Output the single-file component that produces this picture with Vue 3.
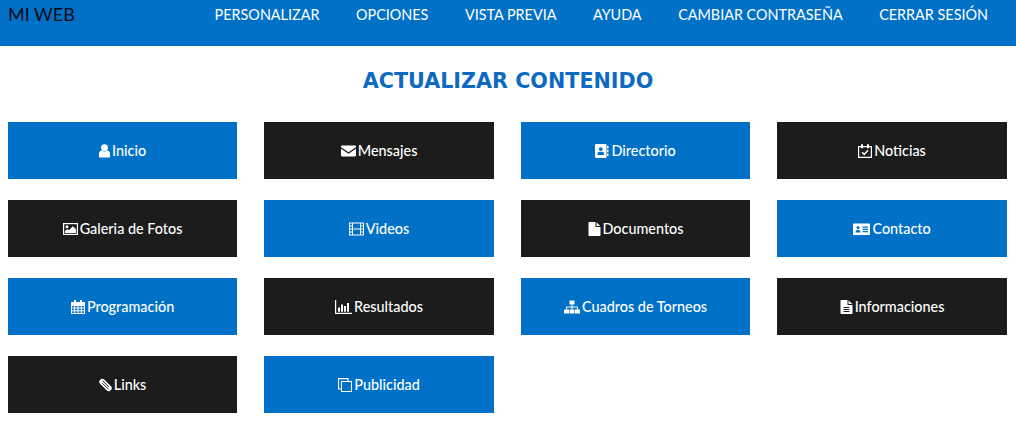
<template>
  <div class="page">
    <header class="topbar">
      <span class="brand">MI WEB</span>
      <nav class="menu">
        <a v-for="item in menu" :key="item" class="menu-link">{{ item }}</a>
      </nav>
    </header>

    <h1 class="title">ACTUALIZAR CONTENIDO</h1>

    <div class="tiles">
      <a v-for="tile in tiles" :key="tile.label" :class="['tile', tile.dark ? 'tile-dark' : 'tile-blue']">
        <svg class="icon" :width="tile.w || 14" height="14" :viewBox="`0 0 ${tile.w || 14} 14`" v-html="tile.icon"></svg>
        <span class="tile-label">{{ tile.label }}</span>
      </a>
    </div>
  </div>
</template>

<script setup>
const menu = ['PERSONALIZAR', 'OPCIONES', 'VISTA PREVIA', 'AYUDA', 'CAMBIAR CONTRASEÑA', 'CERRAR SESIÓN']

const tiles = [
  { label: 'Inicio', dark: false, w: 11, icon: '<circle cx="5.5" cy="3.7" r="3.4" fill="#fff"/><path d="M0 12.500V9.700C0 7.900 1.200 6.500 2.800 6.400 3.500 7 4.400 7.400 5.500 7.400S7.500 7 8.200 6.400C9.800 6.500 11 7.900 11 9.700V12.500C11 13.200 10.600 13.600 10 13.600H1C.4 13.600 0 13.200 0 12.500Z" fill="#fff"/>' },
  { label: 'Mensajes', dark: true, w: 15, icon: '<path d="M0 2.700C0 2 .5 1.500 1.200 1.500H13.800C14.500 1.500 15 2 15 2.700V3.200L7.500 8.200 0 3.200ZM0 4.800 7.500 9.800 15 4.800V11.300C15 12 14.500 12.500 13.800 12.500H1.200C.5 12.500 0 12 0 11.300Z" fill="#fff"/>' },
  { label: 'Directorio', dark: false, icon: '<path fill-rule="evenodd" d="M0 1.200C0 .5 .5 0 1.200 0H11.500V14H1.200C.5 14 0 13.500 0 12.800ZM5.800 3.200A1.900 1.900 0 1 0 5.800 7 1.900 1.900 0 1 0 5.800 3.200ZM2.500 11H9V9.500C9 8.500 8.200 7.700 7.200 7.700H4.300C3.300 7.700 2.500 8.500 2.500 9.500Z" fill="#fff"/><path d="M12 2H13.500V4.500H12ZM12 5.800H13.500V8.300H12ZM12 9.500H13.500V12H12Z" fill="#fff"/>' },
  { label: 'Noticias', dark: true, icon: '<g fill="none" stroke="#fff"><path d="M.6 2.600H13.400V13.400H.6Z" stroke-width="1.200"/><path d="M4 8.200 6.200 10.400 10 6.200" stroke-width="1.500"/></g><path d="M3 .2H5V4.200H3ZM9 .2H11V4.200H9Z" fill="#fff"/>' },
  { label: 'Galeria de Fotos', dark: true, w: 15, icon: '<rect x=".6" y="1.600" width="13.800" height="10.800" fill="none" stroke="#fff" stroke-width="1.200"/><circle cx="4" cy="4.800" r="1.500" fill="#fff"/><path d="M2 11V9L4.500 7 6 8.200 9.800 4.200 13 7.300V11Z" fill="#fff"/>' },
  { label: 'Videos', dark: false, w: 15, icon: '<g fill="none" stroke="#fff" stroke-width="1"><rect x=".5" y="1" width="14" height="12"/><path d="M3.500 1V13M11.500 1V13M.5 4H3.500M.5 7H14.500M.5 10H3.500M11.500 4H14.500M11.500 10H14.500"/></g>' },
  { label: 'Documentos', dark: true, w: 13, icon: '<path d="M.5 1C.5 .4 .9 0 1.500 0H7.500V5H12.500V13C12.500 13.600 12.100 14 11.500 14H1.500C.9 14 .5 13.600 .5 13ZM8.500 .2 12.300 4H8.500Z" fill="#fff"/>' },
  { label: 'Contacto', dark: false, w: 17, icon: '<path d="M1 1.500H16C16.600 1.500 17 1.900 17 2.500V12C17 12.600 16.600 13 16 13H1C.4 13 0 12.600 0 12V2.500C0 1.900 .4 1.500 1 1.500Z" fill="#fff"/><circle cx="5" cy="5.500" r="1.500" fill="#0071c7"/><path d="M2.500 10.500C2.500 8.700 3.500 7.700 5 7.700S7.500 8.700 7.500 10.500Z" fill="#0071c7"/><path d="M9.500 4.500H15V5.700H9.500ZM9.500 6.800H15V8H9.500ZM9.500 9.100H15V10.300H9.500Z" fill="#0071c7"/>' },
  { label: 'Programación', dark: false, icon: '<g fill="none" stroke="#fff" stroke-width="1"><rect x=".5" y="2.500" width="13" height="11"/><path d="M.5 5.500H13.500M.5 8H13.500M.5 10.800H13.500M3.700 5.500V13.500M7 5.500V13.500M10.300 5.500V13.500"/></g><path d="M1 3H13V5.500H1ZM3 0H5V3H3ZM9 0H11V3H9Z" fill="#fff"/>' },
  { label: 'Resultados', dark: true, w: 17, icon: '<path d="M.6 0V13.300H17" fill="none" stroke="#fff" stroke-width="1.200"/><path d="M3 7.500H5V11.800H3ZM6 4.500H8V11.800H6ZM9 6H11V11.800H9ZM12 3H14V11.800H12Z" fill="#fff"/>' },
  { label: 'Cuadros de Torneos', dark: false, w: 16, icon: '<path d="M5.500 .5H10.500V4.500H5.500ZM0 9.500H5V13.500H0ZM5.500 9.500H10.500V13.500H5.500ZM11 9.500H16V13.500H11Z" fill="#fff"/><path d="M8 4.500V9.500M2.500 9.500V7H13.500V9.500" fill="none" stroke="#fff" stroke-width="1"/>' },
  { label: 'Informaciones', dark: true, w: 13, icon: '<path fill-rule="evenodd" d="M.5 1C.5 .4 .9 0 1.500 0H7.500V5H12.500V13C12.500 13.600 12.100 14 11.500 14H1.500C.9 14 .5 13.600 .5 13ZM3.500 7V8H9.500V7ZM3.500 9V10H9.500V9ZM3.500 11V12H9.500V11Z" fill="#fff"/><path d="M8.500 .2 12.300 4H8.500Z" fill="#fff"/>' },
  { label: 'Links', dark: true, w: 13, icon: '<g transform="rotate(45 6.500 7)"><rect x="-1" y="4" width="15" height="6" rx="3" fill="#fff"/><path d="M1.500 6H10.500M3 8H11.500" stroke="#1c1c1c" stroke-width=".9"/></g>' },
  { label: 'Publicidad', dark: false, icon: '<g fill="none" stroke="#fff" stroke-width="1.100"><path d="M3 11H.6V.6H10V3"/><rect x="3.500" y="3.500" width="10" height="10" rx=".5"/></g>' },
]
</script>

<style scoped>
.page {
  font-family: Lato, "Open Sans", sans-serif;
  background: #fff;
  min-height: 432px;
}

.topbar {
  display: flex;
  justify-content: space-between;
  height: 46px;
  padding: 0 28px 0 8px;
  background: #0071c7;
}

.brand {
  color: #0a0a14;
  font-size: 18px;
  line-height: 29px;
}

.menu {
  display: flex;
  gap: 36.500px;
}

.menu-link {
  color: #fff;
  font-size: 14.400px;
  line-height: 30px;
}

.title {
  margin: 21px 0 24px;
  padding-bottom: 2px;
  color: #0d6ac2;
  font-family: "DejaVu Sans", sans-serif;
  font-size: 20.700px;
  font-weight: 700;
  line-height: 29px;
  text-align: center;
}

.tiles {
  display: grid;
  grid-template-columns: repeat(4, 1fr);
  grid-auto-rows: 57px;
  gap: 21px 27px;
  padding: 0 9.200px 0 7.800px;
}

.tile {
  display: flex;
  align-items: center;
  justify-content: center;
  gap: 2px;
  color: #fff;
  font-size: 14.400px;
  font-weight: 500;
}

.tile-label {
  padding-bottom: 1px;
}

.tile-blue {
  background: #0071c7;
}

.tile-dark {
  background: #1c1c1c;
}

.icon {
  flex: none;
}
</style>

<style>
html,
body {
  background: #fff;
}
</style>
